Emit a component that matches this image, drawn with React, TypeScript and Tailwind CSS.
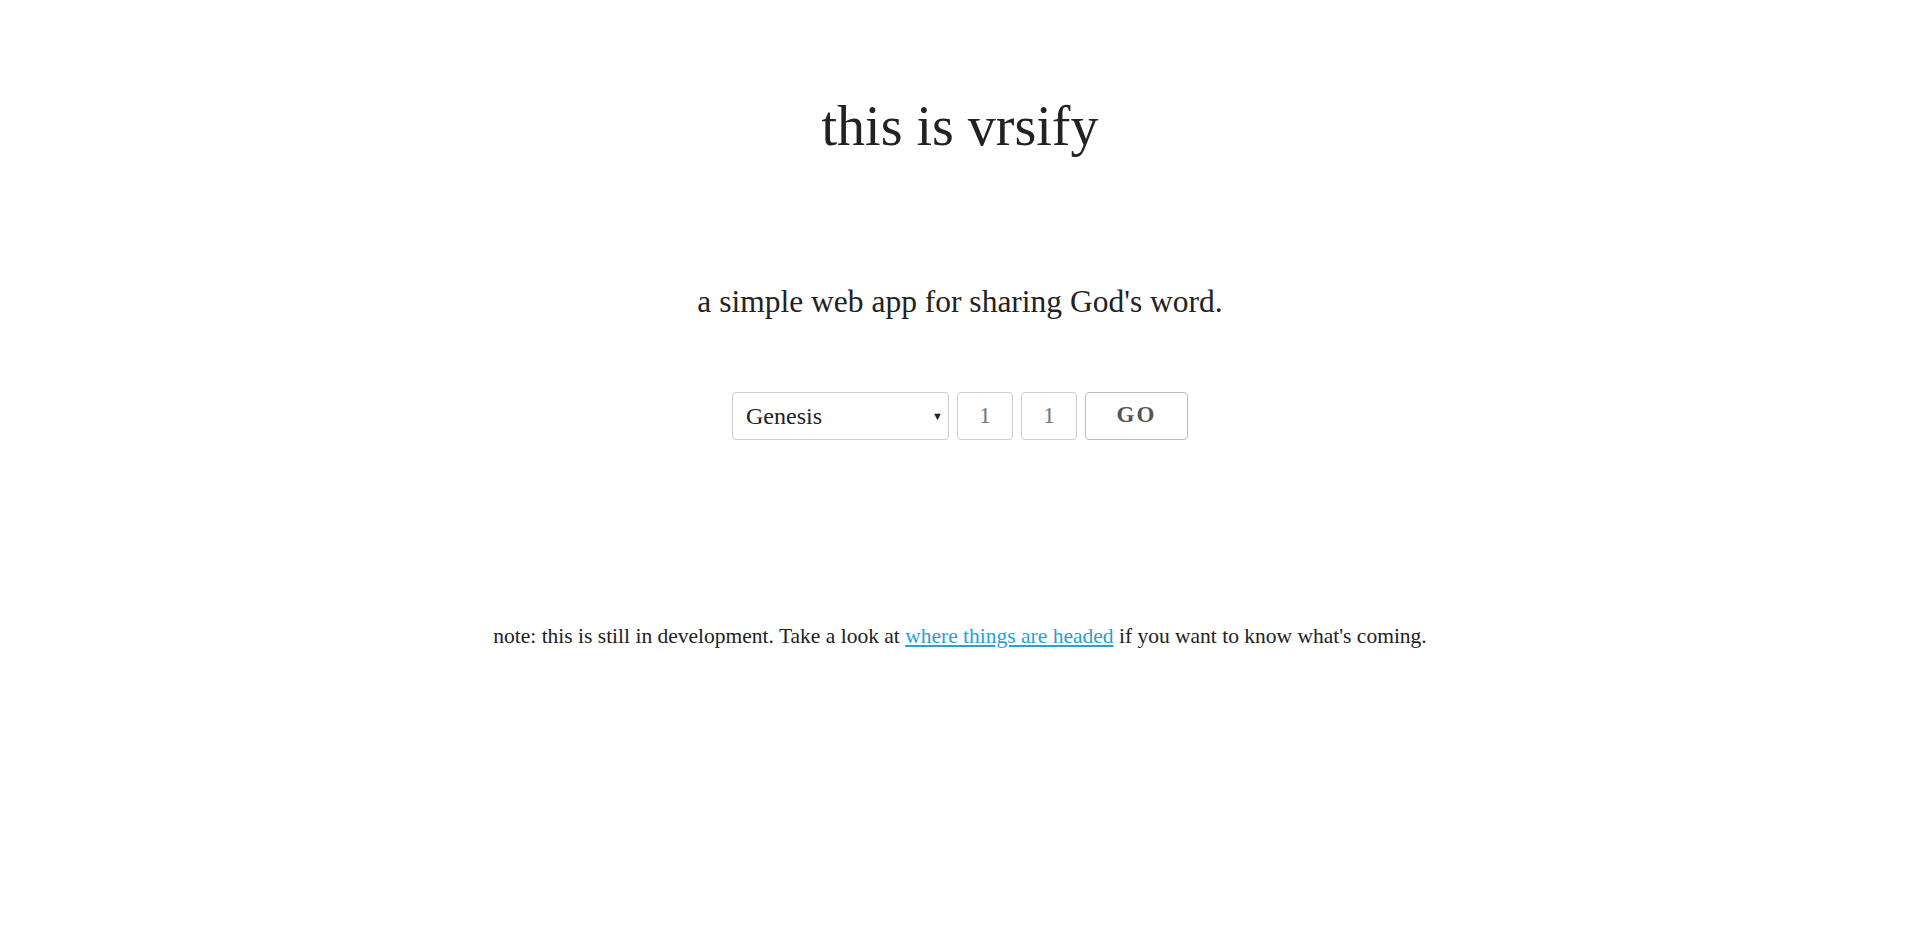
import { useState } from 'react';

const books = ['Genesis', 'Exodus', 'Leviticus', 'Numbers', 'Deuteronomy'];

export default function App() {
  const [book, setBook] = useState('Genesis');
  const [chapter, setChapter] = useState('');
  const [verse, setVerse] = useState('');

  return (
    <div className="min-h-screen bg-white text-[#222] font-['Liberation_Serif',serif] flex flex-col items-center">
      <h1 className="mt-[98px] text-[56px] leading-none text-[#222]">this is vrsify</h1>

      <p className="mt-[132px] text-[31.5px] leading-none text-[#222]">
        a simple web app for sharing God's word.
      </p>

      <div className="mt-[74px] flex items-center gap-[8px]">
        <div className="relative">
          <select
            value={book}
            onChange={e => setBook(e.target.value)}
            className="appearance-none w-[217px] h-[48px] pl-[13px] pr-8 border border-[#ccc] rounded-[4px] bg-white text-[24px] text-[#222] outline-none"
          >
            {books.map(b => (
              <option key={b} value={b}>{b}</option>
            ))}
          </select>
          <span className="pointer-events-none absolute right-[6px] top-1/2 -translate-y-1/2 text-[11px] text-[#222]">▼</span>
        </div>
        <input
          type="text"
          placeholder="1"
          value={chapter}
          onChange={e => setChapter(e.target.value)}
          className="w-[56px] h-[48px] border border-[#ccc] rounded-[4px] text-center text-[24px] text-[#555] placeholder:text-[#777] outline-none"
        />
        <input
          type="text"
          placeholder="1"
          value={verse}
          onChange={e => setVerse(e.target.value)}
          className="w-[56px] h-[48px] border border-[#ccc] rounded-[4px] text-center text-[24px] text-[#555] placeholder:text-[#777] outline-none"
        />
        <button className="w-[103px] h-[48px] border border-[#bbb] rounded-[4px] bg-white text-[23px] font-bold tracking-[2px] text-[#555]">
          GO
        </button>
      </div>

      <p className="mt-[186px] text-[21.5px] leading-none text-[#222]">
        note: this is still in development. Take a look at{' '}
        <a href="#" className="text-[#1fa3d8] underline">where things are headed</a>{' '}
        if you want to know what's coming.
      </p>
    </div>
  );
}
